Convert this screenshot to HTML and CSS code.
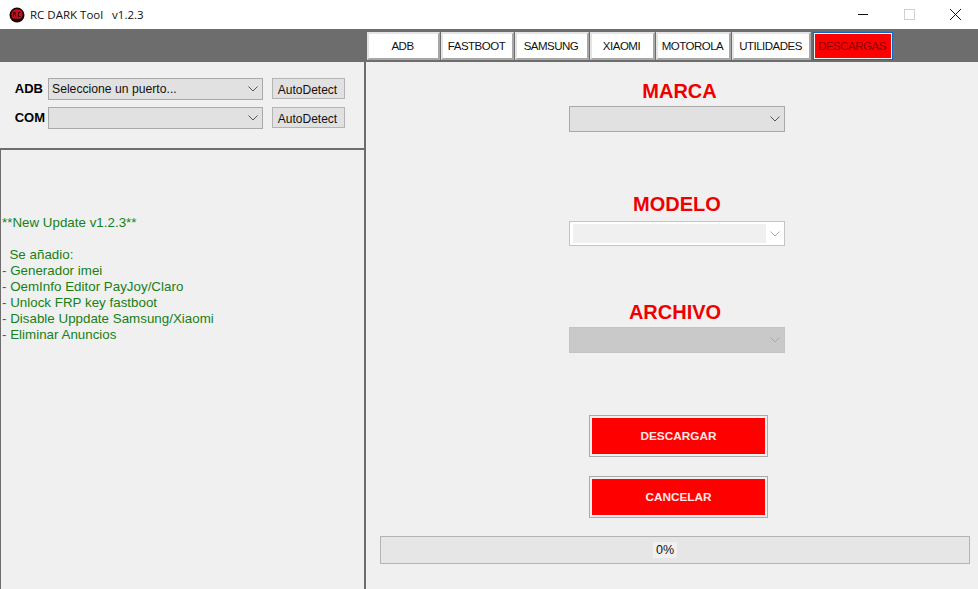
FILE: index.html
```html
<!DOCTYPE html>
<html lang="es">
<head>
<meta charset="utf-8">
<title>RC DARK Tool v1.2.3</title>
<link rel="stylesheet" href="styles.css">
</head>
<body>
<div class="window">
  <header class="titlebar">
    <svg class="logo" width="16" height="16" viewBox="0 0 16 16"><circle cx="8" cy="8" r="7.5" fill="#1c0406"/><circle cx="8" cy="7.5" r="5.6" fill="#c8101c"/><path d="M4.5 5v4.5M4.5 5.5h2v1.5h-2M6.5 7.5l.5 2M11.5 5.5H9.5v4h2" fill="none" stroke="#30060a" stroke-width="1"/><path d="M3.5 12.5h9" stroke="#000" stroke-width="1.5"/></svg>
    <span class="title">RC DARK Tool&nbsp;&nbsp; v1.2.3</span>
    <div class="controls">
      <svg class="ctl" width="46" height="29" viewBox="0 0 46 29"><path d="M18 14.5h10" stroke="#111" stroke-width="1"/></svg>
      <svg class="ctl" width="46" height="29" viewBox="0 0 46 29"><rect x="18.5" y="9.5" width="10" height="10" fill="none" stroke="#d0d0d0"/></svg>
      <svg class="ctl" width="46" height="29" viewBox="0 0 46 29"><path d="M18 9l11 11M29 9L18 20" stroke="#111" stroke-width="1"/></svg>
    </div>
  </header>
  <nav class="tabbar">
    <button class="tab t-adb">ADB</button>
    <button class="tab t-fast">FASTBOOT</button>
    <button class="tab t-sam">SAMSUNG</button>
    <button class="tab t-xia">XIAOMI</button>
    <button class="tab t-mot">MOTOROLA</button>
    <button class="tab t-uti">UTILIDADES</button>
    <button class="tab t-des active">DESCARGAS</button>
  </nav>
  <main class="content">
    <aside class="left">
      <section class="ports">
        <div class="port-row">
          <label class="port-label">ADB</label>
          <div class="select port-select"><span class="select-text">Seleccione un puerto...</span><svg class="chev" width="10" height="6" viewBox="0 0 10 6"><path d="M.5.5L5 5 9.5.5" fill="none" stroke="#555"/></svg></div>
          <button class="auto">AutoDetect</button>
        </div>
        <div class="port-row">
          <label class="port-label com">COM</label>
          <div class="select port-select"><span class="select-text"></span><svg class="chev" width="10" height="6" viewBox="0 0 10 6"><path d="M.5.5L5 5 9.5.5" fill="none" stroke="#555"/></svg></div>
          <button class="auto">AutoDetect</button>
        </div>
      </section>
      <section class="log">
        <p class="log-line">**New Update v1.2.3**</p>
        <p class="log-line">&nbsp;</p>
        <p class="log-line">&nbsp; Se añadio:</p>
        <p class="log-line">- Generador imei</p>
        <p class="log-line">- OemInfo Editor PayJoy/Claro</p>
        <p class="log-line">- Unlock FRP key fastboot</p>
        <p class="log-line">- Disable Uppdate Samsung/Xiaomi</p>
        <p class="log-line">- Eliminar Anuncios</p>
      </section>
    </aside>
    <section class="right">
      <h2 class="field-title first">MARCA</h2>
      <div class="select big"><svg class="chev" width="10" height="6" viewBox="0 0 10 6"><path d="M.5.5L5 5 9.5.5" fill="none" stroke="#555"/></svg></div>
      <h2 class="field-title second">MODELO</h2>
      <div class="select big white"><span class="inner"></span><svg class="chev" width="10" height="6" viewBox="0 0 10 6"><path d="M.5.5L5 5 9.5.5" fill="none" stroke="#aaa"/></svg></div>
      <h2 class="field-title third">ARCHIVO</h2>
      <div class="select big disabled"><svg class="chev" width="10" height="6" viewBox="0 0 10 6"><path d="M.5.5L5 5 9.5.5" fill="none" stroke="#aaa"/></svg></div>
      <button class="action first-action">DESCARGAR</button>
      <button class="action second-action">CANCELAR</button>
      <div class="progress"><span class="pct">0%</span></div>
    </section>
  </main>
</div>
</body>
</html>
```
FILE: styles.css
```css
* { box-sizing: border-box; }
html, body { margin: 0; padding: 0; }
body { font-family: "Liberation Sans", Arial, sans-serif; background: #f0f0f0; overflow: hidden; }
.window { width: 978px; height: 589px; display: flex; flex-direction: column; }

.titlebar { height: 29px; background: #fff; display: flex; align-items: center; padding-left: 9px; }
.logo { flex: none; }
.title { margin: -1px 0 0 5px; font-size: 11.5px; color: #111; font-family: "Open Sans", "Liberation Sans", sans-serif; white-space: pre; }
.controls { margin-left: auto; display: flex; }
.ctl { display: block; }

.tabbar { height: 33px; background: #6d6d6d; display: flex; align-items: flex-start; padding: 3px 0 0 367px; gap: 1px; }
.tab { height: 28px; padding: 0 2px 1px 0; background: #fff; border: 2px solid #d8d8d8; border-color: #e4e4e4 #a8a8a8 #a8a8a8 #e4e4e4; font: 11.5px "Liberation Sans", sans-serif; letter-spacing: -0.5px; color: #111; }
.t-adb { width: 73px; }
.t-fast { width: 73px; }
.t-sam { width: 74px; }
.t-xia { width: 65px; }
.t-mot { width: 75px; }
.t-uti { width: 79px; }
.t-des { width: 80px; margin-left: 1px; }
.tab.active { background: #f00; border: 2px solid #f4f4f4; outline: 1px solid #0a6cc4; outline-offset: -1px; color: #8a0000; }

.content { flex: 1; display: flex; min-height: 0; }
.left { width: 366px; flex: none; display: flex; flex-direction: column; border-right: 2px solid #6d6d6d; }
.ports { height: 88px; padding-top: 16px; border-bottom: 2px solid #6d6d6d; display: flex; flex-direction: column; gap: 7px; }
.port-row { display: flex; align-items: flex-start; height: 22px; }
.port-label { width: 48px; padding: 3px 5px 0 0; text-align: right; font-size: 13px; font-weight: bold; color: #000; }
.port-label.com { padding-right: 3px; }
.select { position: relative; height: 22px; background: #e1e1e1; border: 1px solid #a9a9a9; display: flex; align-items: center; }
.port-select { width: 215px; }
.select-text { padding-left: 3px; font-size: 12.2px; color: #111; }
.chev { position: absolute; right: 4px; top: 50%; margin-top: -3px; }
.auto { margin-left: 9px; width: 73px; height: 21px; padding: 2px 2px 0 0; background: #e1e1e1; border: 1px solid #b4b4b4; font: 12px "Liberation Sans", sans-serif; color: #111; }
.log { flex: 1; border-left: 1px solid #6d6d6d; padding: 65px 0 0 1px; }
.log-line { margin: 0; height: 16px; line-height: 16px; font-size: 13.33px; letter-spacing: 0.02px; color: #178017; white-space: pre; }

.right { flex: 1; position: relative; padding-left: 203px; display: flex; flex-direction: column; align-items: flex-start; }
.field-title { margin: 0; width: 216px; text-align: center; font-size: 20px; line-height: 22px; font-weight: bold; color: #ee0000; }
.field-title.first { margin-top: 18px; margin-left: 2.5px; margin-bottom: 4px; }
.field-title.second { margin-top: 61px; margin-bottom: 6px; margin-left: 0; }
.field-title.third { margin-top: 55px; margin-bottom: 4px; margin-left: -2px; }
.big { width: 216px; height: 26px; }
.white { background: #fff; border-color: #c4c4c4; height: 25px; }
.inner { position: absolute; left: 3px; top: 2px; bottom: 2px; right: 18px; background: #f0f0f0; }
.disabled { background: #c9c9c9; border-color: #c4c4c4; }
.action { display: block; width: 179px; height: 42px; padding: 0; background: #f00; border: 3px solid #f0f0f0; outline: 1px solid #aaa; outline-offset: -1px; color: #ffe8e8; font: bold 11.8px "Liberation Sans", sans-serif; margin-left: 20px; }
.first-action { margin-top: 62px; }
.second-action { margin-top: 19px; }
.progress { margin: 18px 0 0 -189px; width: 590px; height: 28px; background: #e6e6e6; border: 1px solid #b4b4b4; display: flex; align-items: center; justify-content: center; padding-right: 20px; }
.pct { background: #f0f0f0; font-size: 12.5px; padding: 1px 3px; color: #111; }
```
